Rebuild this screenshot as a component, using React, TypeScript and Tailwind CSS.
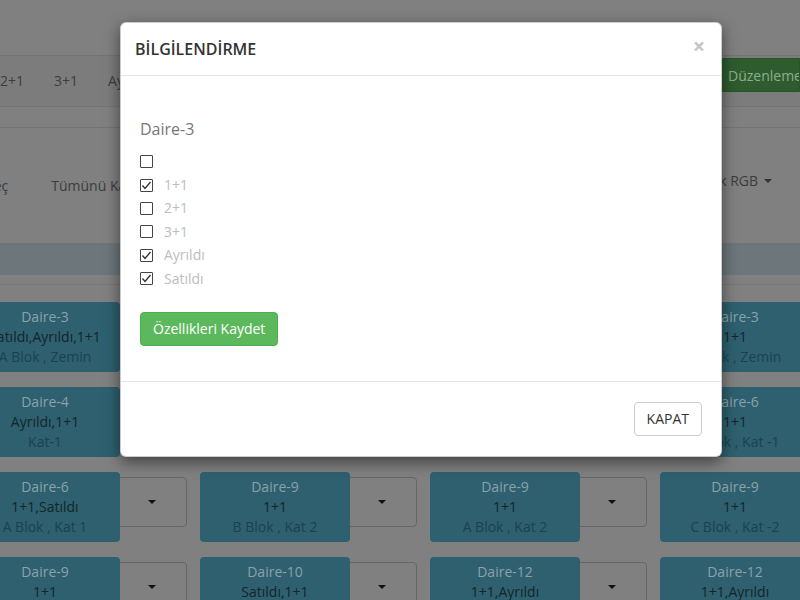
import React from "react";

type Cell = { t: string; s: string; b: string };

const rows: Cell[][] = [
  [
    { t: "Daire-3", s: "Satıldı,Ayrıldı,1+1", b: "A Blok , Zemin" },
    { t: "Daire-3", s: "1+1", b: "B Blok , Zemin" },
    { t: "Daire-3", s: "Satıldı", b: "A Blok , Zemin" },
    { t: "Daire-3", s: "1+1", b: "C Blok , Zemin" },
  ],
  [
    { t: "Daire-4", s: "Ayrıldı,1+1", b: "Kat-1" },
    { t: "Daire-6", s: "1+1", b: "B Blok , Kat 1" },
    { t: "Daire-6", s: "1+1", b: "A Blok , Kat 1" },
    { t: "Daire-6", s: "1+1", b: "C Blok , Kat -1" },
  ],
  [
    { t: "Daire-6", s: "1+1,Satıldı", b: "A Blok , Kat 1" },
    { t: "Daire-9", s: "1+1", b: "B Blok , Kat 2" },
    { t: "Daire-9", s: "1+1", b: "A Blok , Kat 2" },
    { t: "Daire-9", s: "1+1", b: "C Blok , Kat -2" },
  ],
  [
    { t: "Daire-9", s: "1+1", b: "A Blok , Kat 2" },
    { t: "Daire-10", s: "Satıldı,1+1", b: "B Blok , Kat 3" },
    { t: "Daire-12", s: "1+1,Ayrıldı", b: "A Blok , Kat 3" },
    { t: "Daire-12", s: "1+1,Ayrıldı", b: "C Blok , Kat -3" },
  ],
];

function Caret({ dark }: { dark?: boolean }) {
  return (
    <span
      className={
        dark
          ? "inline-block w-0 h-0 border-x-[4px] border-x-transparent border-t-[4px] border-t-[#111]"
          : "inline-block w-0 h-0 border-x-[4px] border-x-transparent border-t-[4px] border-t-[#333]"
      }
    />
  );
}

function Check({ checked, label }: { checked: boolean; label: string }) {
  return (
    <div className="flex items-center h-[23.4px]">
      <span className="w-[13px] h-[13px] border border-[#444] bg-white rounded-[1px] flex items-center justify-center shrink-0">
        {checked && (
          <svg width="11" height="11" viewBox="0 0 11 11">
            <polyline points="1.5,5.5 4,8.5 9.5,2" fill="none" stroke="#333" strokeWidth="1.4" />
          </svg>
        )}
      </span>
      <span className="ml-[11px] text-[14px] leading-5 text-[#bdbdbd]">{label}</span>
    </div>
  );
}

export default function App() {
  return (
    <div className="relative w-[800px] h-[600px] overflow-hidden bg-[#808080] font-['Open_Sans',sans-serif] text-[14px] text-[#1a1a1a]">
      {/* dimmed background page (behind the modal backdrop) */}
      <div className="h-[55px]" />
      <div className="h-[52px] bg-[#7c7c7c] border-y border-[#747474] flex items-center justify-between">
        <div className="flex items-center ml-[-15px] text-[#3c3c3c] leading-5">
          <span className="px-[15px]">2+1</span>
          <span className="px-[15px]">3+1</span>
          <span className="px-[15px]">Ayrıldı</span>
        </div>
        <div className="h-[34px] self-start mt-[2px] bg-[#2e5c2e] border border-[#265726] rounded-l-[4px] pl-[7px] pr-3 flex items-center text-[#8fae8f] w-[80px] whitespace-nowrap overflow-hidden">
          Düzenleme Modu
        </div>
      </div>
      <div className="h-[21px] border-b border-[#747474]" />
      <div className="h-[115px] flex items-center justify-between text-[#3c3c3c]">
        <div className="flex items-center">
          <span className="ml-[-14px]">Seç</span>
          <span className="ml-[43px]">Tümünü Kaldır</span>
        </div>
        <div className="flex items-center gap-[6px] mr-[28px] pb-[10px]">
          <span>Renk RGB</span>
          <Caret />
        </div>
      </div>
      <div className="h-[32px] bg-[#6c767b]" />
      <div className="h-[27px] pt-[1px]">
        <div className="h-[9px] border-b border-[#787878]" />
      </div>
      <div className="flex flex-col gap-[15px] ml-[-30px]">
        {rows.map((row, i) => (
          <div key={i} className="flex">
            {row.map((c, j) => (
              <div key={j} className="flex w-[230px] shrink-0">
                <div className="relative w-[150px] h-[70px] shrink-0 bg-[#2e606f] rounded-[4px] pt-[5px] flex flex-col items-center text-[14px] leading-5 whitespace-nowrap">
                  <span className="text-[#8ba2aa]">{c.t}</span>
                  <span className="text-[#13252b]">{c.s}</span>
                  <span className="text-[#1b4250]">{c.b}</span>
                </div>
                <div className="w-[70px] h-[50px] mt-[5px] ml-[-3px] shrink-0 bg-[#808080] border border-[#666] rounded-r-[4px] flex items-center justify-center">
                  <Caret dark />
                </div>
              </div>
            ))}
          </div>
        ))}
      </div>

      {/* modal */}
      <div className="absolute left-[120px] top-[22px] w-[602px] bg-white rounded-[6px] border border-black/20 shadow-[0_5px_15px_rgba(0,0,0,0.5)]">
        <div className="h-[53px] px-[14px] flex items-center justify-between border-b border-[#e5e5e5]">
          <span className="text-[16px] font-semibold text-[#333] leading-[23px] mt-[1px]">BİLGİLENDİRME</span>
          <span className="text-[21px] font-bold leading-none text-[#c4c4c4] mr-[2px] mb-[6px]">×</span>
        </div>
        <div className="px-[19px] pt-[42px] pb-[35px] border-b border-[#e5e5e5]">
          <div className="text-[16px] leading-[22px] text-[#777]">Daire-3</div>
          <div className="mt-[10px]">
            <Check checked={false} label="" />
            <Check checked={true} label="1+1" />
            <Check checked={false} label="2+1" />
            <Check checked={false} label="3+1" />
            <Check checked={true} label="Ayrıldı" />
            <Check checked={true} label="Satıldı" />
          </div>
          <button className="mt-[22px] h-[34px] px-3 bg-[#5cb85c] border border-[#4cae4c] rounded-[4px] text-white text-[14px] leading-5">
            Özellikleri Kaydet
          </button>
        </div>
        <div className="h-[74px] px-[19px] flex items-center justify-end">
          <button className="h-[34px] px-3 bg-white border border-[#ccc] rounded-[4px] text-[#333] text-[14px] leading-5">
            KAPAT
          </button>
        </div>
      </div>
    </div>
  );
}
